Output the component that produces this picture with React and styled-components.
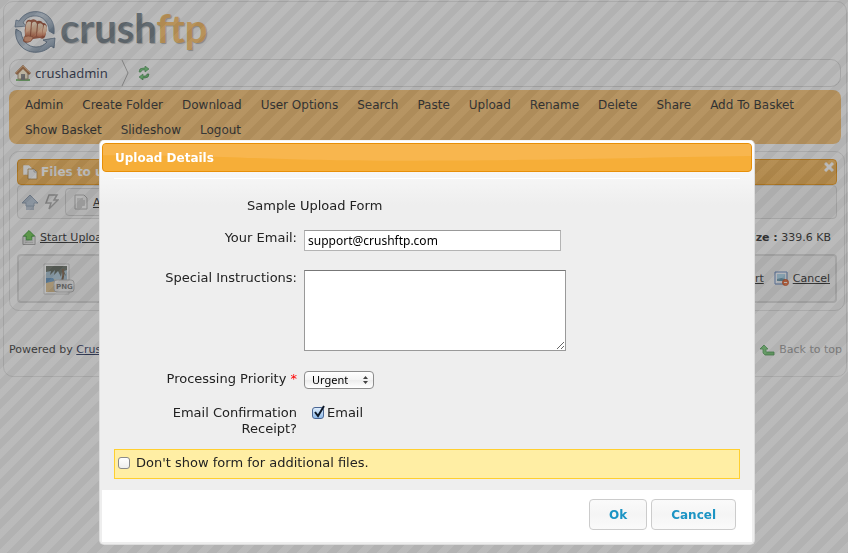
import React, { useState } from 'react';
import styled, { createGlobalStyle, css } from 'styled-components';

const GlobalStyle = createGlobalStyle`
    * {
        box-sizing: border-box;
    }
    body {
        margin: 0;
        background: #ffffff;
        color: #222222;
        font: 12px/16px "DejaVu Sans", Verdana, sans-serif;
    }
    button, input, select, textarea {
        font-family: inherit;
        margin: 0;
    }
`;

const orangeBar = css`
    border: 1px solid #e78f08;
    border-radius: 4px;
    background: #f6ae38;
`;

const Page = styled.main`
    margin: 1px 1px 0 3px;
    padding: 0 1px 18px 5px;
    border: 1px solid #e4e4e4;
    border-radius: 10px;
`;

const LogoRow = styled.header`
    display: flex;
    align-items: center;
    height: 57px;
    padding-left: 5px;
`;

const LogoText = styled.span`
    font: bold 40px/48px Lato, sans-serif;
    color: #6c7a84;
    text-shadow: 1px 1px 1px #b4b4b4;
    margin: 0 0 6px 4px;

    em {
        font-style: normal;
        color: #fbbc5c;
    }
`;

const Crumbs = styled.nav`
    display: flex;
    align-items: center;
    gap: 4px;
    height: 28px;
    margin-right: 4px;
    padding: 0 5px;
    border: 1px solid #dcdcdc;
    border-radius: 10px;
    font: 13px/16px "Noto Sans", sans-serif;

    svg:nth-of-type(2) {
        margin: 0 4px 0 9px;
    }
`;

const CrumbLink = styled.a`
    color: #1d2b45;
    text-decoration: none;
`;

const Menu = styled.nav`
    display: flex;
    flex-wrap: wrap;
    column-gap: 19px;
    margin: 3px 4px 0 0;
    padding: 3px 16px 1px;
    border-radius: 8px;
    background: #f8be6a;
`;

const MenuLink = styled.a`
    line-height: 25px;
    color: #222222;
    text-decoration: none;
`;

const UploadPanel = styled.section`
    margin-top: 7px;
    padding: 7px;
    border: 1px solid #e2e2e2;
    border-radius: 10px;
`;

const PanelTitle = styled.h2`
    ${orangeBar}
    display: flex;
    align-items: center;
    gap: 3px;
    height: 26px;
    margin: 0;
    padding: 0 2px 0 4px;
    background: linear-gradient(#f6b654, #f4b049);
    font-size: 12px;
    color: #ffffff;
`;

const CloseButton = styled.button`
    display: flex;
    align-self: flex-start;
    margin-left: auto;
    padding: 2px 0;
    border: 0;
    background: none;
`;

const ToolBar = styled.div`
    display: flex;
    align-items: center;
    gap: 6px;
    height: 34px;
    padding: 0 3px;
    border: 1px solid #dadada;
    border-radius: 4px;
    background: #f7f7f7;
`;

const ToolButton = styled.button`
    display: flex;
    align-items: center;
    gap: 5px;
    height: 28px;
    padding: 0 8px;
    border: 1px solid #d0d0d0;
    border-radius: 4px;
    background: #f3f3f3;
    font-size: 11px;
    text-decoration: underline;
    color: #222222;
`;

const IconLink = styled.a`
    display: flex;
    align-items: center;
    gap: 4px;
    font-size: 11px;
    color: ${(props) => (props.$muted ? '#999999' : '#222222')};
    text-decoration: ${(props) => (props.$muted ? 'none' : 'underline')};
`;

const StatusRow = styled.div`
    display: flex;
    align-items: center;
    justify-content: space-between;
    height: 35px;
    padding: 2px 6px 0 5px;
    font-size: 11px;
`;

const FileRow = styled.div`
    display: flex;
    align-items: center;
    gap: 10px;
    height: 49px;
    padding: 0 5px 0 24px;
    border: 2px solid #dadada;
    border-radius: 4px;
    background: #f5f5f5;

    svg:first-child {
        margin-right: auto;
    }
`;

const Footer = styled.footer`
    display: flex;
    justify-content: space-between;
    margin: 31px 3px 0 0;
    font-size: 11px;
    color: #333333;

    a {
        color: #1d2b55;
    }
    ${IconLink} {
        color: #999999;
    }
`;

const Overlay = styled.div`
    position: fixed;
    inset: 0;
    padding: 140px 93px 8px 99px;
    background: linear-gradient(135deg,
        rgba(68, 68, 68, 0.41) 25%, rgba(88, 88, 88, 0.41) 25%,
        rgba(88, 88, 88, 0.41) 50%, rgba(68, 68, 68, 0.41) 50%,
        rgba(68, 68, 68, 0.41) 75%, rgba(88, 88, 88, 0.41) 75%) 0 0 / 20px 20px;
    overflow: auto;
`;

const Dialog = styled.section`
    padding: 2px;
    border: 1px solid #dddddd;
    border-top-color: #f4f4f4;
    border-radius: 5px;
    background: linear-gradient(#ffffff, #eeeeee 64px);
`;

const DialogTitle = styled.h1`
    ${orangeBar}
    position: relative;
    height: 29px;
    margin: 0;
    padding: 0 12px;
    font-size: 12px;
    line-height: 28px;
    color: #ffffff;
    overflow: hidden;

    svg {
        position: absolute;
        inset: 0;
        width: 100%;
        height: 100%;
    }
    span {
        position: relative;
    }
`;

const Form = styled.form`
    font-size: 13px;
`;

const FormBody = styled.div`
    margin: 6px 12px 0;
    padding: 19px 0 11px;
    border-top: 1px solid #ffffff;
`;

const FormHeading = styled.h2`
    margin: 0 0 16px 133px;
    font-size: 13px;
    font-weight: normal;
`;

const FormRow = styled.div`
    display: grid;
    grid-template-columns: 183px 1fr;
    column-gap: 7px;
    margin-bottom: ${(props) => props.$gap}px;
`;

const Label = styled.label`
    text-align: right;

    em {
        font-style: normal;
        color: #ff0000;
    }
`;

const TextInput = styled.input`
    width: 257px;
    height: 21px;
    padding: 0 3px;
    border: 1px solid #b4b4b4;
    border-top-color: #999999;
    background: #ffffff;
    font: 12px/16px "Noto Sans", sans-serif;
    color: #000000;
`;

const TextArea = styled.textarea`
    display: block;
    width: 262px;
    height: 81px;
    border: 1px solid #999999;
    border-top-color: #777777;
    background: #ffffff;
`;

const SelectBox = styled.div`
    position: relative;
    width: 70px;

    svg {
        position: absolute;
        right: 6px;
        top: 5px;
        pointer-events: none;
    }
`;

const Select = styled.select`
    display: block;
    appearance: none;
    width: 100%;
    height: 18px;
    padding: 0 7px;
    border: 1px solid #8c8c8c;
    border-radius: 4px;
    background: linear-gradient(#ffffff, #f4f4f4 50%, #ececec 50%, #ffffff);
    font: 11px/14px "Noto Sans", sans-serif;
    color: #000000;
`;

const ReceiptCell = styled.div`
    padding-left: 8px;
`;

const CheckLabel = styled.label`
    display: flex;
    align-items: center;
    gap: ${(props) => (props.$wide ? 6 : 3)}px;
`;

const CheckBox = styled.span`
    position: relative;
    display: flex;

    svg {
        position: absolute;
        left: 0;
        bottom: 0;
        pointer-events: none;
    }
`;

const CheckInput = styled.input`
    appearance: none;
    width: 12px;
    height: 12px;
    border: 1px solid #8a8a8a;
    border-radius: 3px;
    background: linear-gradient(#ffffff, #eeeeee);

    &:checked {
        border-color: #4a6694;
        background: linear-gradient(#dcebfa, #8fbcec);
    }
`;

const Notice = styled.div`
    height: 30px;
    margin-top: 12px;
    padding: 5px 3px;
    border: 1px solid #ffcf2f;
    background: #ffeea4;
`;

const ButtonBar = styled.div`
    display: flex;
    justify-content: flex-end;
    gap: 4px;
    padding: 9px 16px 12px;
    background: #ffffff;
`;

const Button = styled.button`
    height: 31px;
    padding: 0 19px;
    border: 1px solid #cccccc;
    border-radius: 4px;
    background: linear-gradient(#fafafa, #f5f5f5 50%, #fafafa);
    font-size: 12px;
    font-weight: bold;
    color: #1c94c4;
`;

const LogoIcon = () => (
    <svg width="42" height="44" viewBox="0 0 42 44">
        <defs>
            <linearGradient id="steel" x1="0" y1="0" x2="1" y2="1">
                <stop offset="0" stopColor="#8aa0b8" />
                <stop offset=".5" stopColor="#c3d0de" />
                <stop offset="1" stopColor="#5d7690" />
            </linearGradient>
            <linearGradient id="skin" x1="0" y1="0" x2="0" y2="1">
                <stop offset="0" stopColor="#ffe9cd" />
                <stop offset=".6" stopColor="#f6b78c" />
                <stop offset="1" stopColor="#c05a38" />
            </linearGradient>
        </defs>
        <circle cx="21" cy="22" r="15" fill="#ffffff" opacity=".6" />
        <path
            d="M2 11l3 1C10 3 22 0 31 5c7 4 10 11 9 20l-5-3C35 13 28 6 20 7c-5 0-9 3-11 7l4 3-12 1z"
            fill="url(#steel)" stroke="#5f7690" strokeWidth=".8"
        />
        <path
            d="M2 20l5 3c1 9 7 15 15 15 5 0 8-2 11-5l-4-2 12-2-1 10-3-2C28 46 13 45 6 36 2 31 1 25 2 20z"
            fill="url(#steel)" stroke="#4b637e" strokeWidth=".8"
        />
        <path d="M12 14q1-4 5-3 3-2 6 1 4-1 6 2 4 0 4 5l-2 9q-2 3-5 1l-7 1-3 3q-5 2-7-1l2-5q-1-6 1-13z" fill="#a04a2e" />
        <path d="M12 16q1-5 5-3l-1 14q-3 2-5-1z" fill="url(#skin)" />
        <path d="M18 14q3-3 5 1l-1 12q-3 2-5 0z" fill="url(#skin)" />
        <path d="M24 15q3-2 5 1l-1 11q-3 2-5 0z" fill="url(#skin)" />
        <path d="M30 16q3 0 3 4l-2 7q-2 1-3-1z" fill="url(#skin)" />
        <path d="M10 28q4-2 9 0l-2 4q-4 2-7 0z" fill="#f0a177" stroke="#9a492e" strokeWidth=".6" />
    </svg>
);

const HomeIcon = () => (
    <svg width="16" height="16" viewBox="0 0 16 16">
        <path d="M1 14h14v2H1z" fill="#74b869" />
        <path d="M3 8l5-5 5 5v6H3z" fill="#fff1d2" stroke="#9b8268" />
        <path d="M1 9l7-7 7 7" fill="none" stroke="#a6683b" strokeWidth="3" />
        <path d="M1 8l7-7 7 7" fill="none" stroke="#dca36c" />
        <path d="M6 9h4v6H6z" fill="#7b7b7b" />
    </svg>
);

const CrumbArrow = () => (
    <svg width="9" height="26" viewBox="0 0 9 26">
        <path d="M1 0l6 13-6 13" fill="none" stroke="#aaaaaa" />
    </svg>
);

const RefreshIcon = () => (
    <svg width="12" height="14" viewBox="0 0 12 14">
        <path
            d="M1 6q0-4 4-4h2V0l4 3-4 3V4H5q-2 0-2 2zM11 8q0 4-4 4H5v2l-4-3 4-3v2h2q2 0 2-2z"
            fill="#65c36d" stroke="#2d7d3b" strokeWidth=".6"
        />
    </svg>
);

const CopyIcon = () => (
    <svg width="16" height="16" viewBox="0 0 16 16">
        <path d="M1 1h6l3 3v7H1z" fill="#ffffff" stroke="#d9a252" strokeWidth=".5" />
        <path d="M6 5h6l3 3v7H6z" fill="#ffffff" stroke="#aa7830" strokeWidth=".8" />
        <path d="M12 5v3h3" fill="none" stroke="#bbbbbb" />
    </svg>
);

const CloseIcon = () => (
    <svg width="10" height="10" viewBox="0 0 10 10">
        <path d="M1 1l8 8M9 1L1 9" stroke="#ffffff" strokeWidth="3" />
    </svg>
);

const UpIcon = () => (
    <svg width="18" height="18" viewBox="0 0 18 18">
        <path d="M9 2l8 8h-4v3H5v-3H1z" fill="#aebfd2" stroke="#8798ad" />
        <path d="M5 14h8M5 16h8" stroke="#7188a6" />
    </svg>
);

const BoltIcon = () => (
    <svg width="14" height="18" viewBox="0 0 14 18">
        <path d="M4 2h8L9 7h4L4 16l2-6H1z" fill="#eeeeee" stroke="#a0a0a0" strokeWidth="1.5" />
    </svg>
);

const PageIcon = () => (
    <svg width="14" height="16" viewBox="0 0 14 16">
        <path d="M1 1h9l3 3v11H1z" fill="#fafafa" stroke="#aaaaaa" />
        <path d="M3 5h6M3 7h8M3 9h8M3 11h8M3 13h5" stroke="#b4b4b4" />
    </svg>
);

const StartIcon = () => (
    <svg width="14" height="17" viewBox="0 0 15 17">
        <path d="M1 7h13v9H1z" fill="#eeeeee" stroke="#999999" />
        <path d="M3 12h9M3 14h9" stroke="#bbbbbb" />
        <path d="M7.500 1l6 6h-3v4h-6V7h-3z" fill="#6fd04f" stroke="#2e982a" />
    </svg>
);

const PngIcon = () => (
    <svg width="32" height="32" viewBox="0 0 32 32">
        <path d="M1 1h25v30H1z" fill="#ffffff" stroke="#c4c4c4" />
        <path d="M3 3h21v14H3z" fill="#a9c6d8" />
        <path d="M3 3h21v4l-3 1 2 5-4-4-1 5-3-6-4 4 1-5-5 5 1-4-5 1z" fill="#5c655b" />
        <path d="M3 18l6-2 15 3v10H3z" fill="#dcbd88" />
        <path d="M3 15h7l2 3-9 2z" fill="#5f93c0" />
        <path d="M20 6q1 6-1 13" fill="none" stroke="#76573e" strokeWidth="2" />
        <rect x="11" y="17" width="20" height="12" rx="3" fill="#eeeeee" stroke="#b4b4b4" />
        <text x="13" y="26" fontSize="7" fontWeight="bold" fill="#707070">PNG</text>
    </svg>
);

const CancelIcon = () => (
    <svg width="15" height="15" viewBox="0 0 15 15">
        <path d="M1 1h12v12H1z" fill="#f4f9ff" stroke="#597dbb" />
        <path d="M3 3h8v6H3z" fill="#a5d2ea" />
        <path d="M3 8l4-1 4 1v2H3z" fill="#5f91a8" />
        <circle cx="11.500" cy="11.500" r="3" fill="#ed6a34" stroke="#c64d20" />
        <path d="M10 11.500h3" stroke="#ffffff" />
    </svg>
);

const BackIcon = () => (
    <svg width="15" height="12" viewBox="0 0 15 12">
        <path d="M4 1l4 4H6v3h8v3H5L3 9V5H0z" fill="#73ca73" stroke="#459c4d" strokeWidth=".8" />
    </svg>
);

const SelectArrows = () => (
    <svg width="5" height="8" viewBox="0 0 5 8">
        <path d="M2.500 0L5 3H0zM2.500 8L0 5h5z" fill="#444444" />
    </svg>
);

const CheckMark = () => (
    <svg width="14" height="15" viewBox="0 0 14 15">
        <path d="M3 8l3 4 6-10" fill="none" stroke="#0c1828" strokeWidth="2" />
    </svg>
);

const TitleShine = () => (
    <svg viewBox="0 0 650 29" preserveAspectRatio="none" aria-hidden="true">
        <path d="M0 12C130 12 170 18 300 18S520 15 650 13V0H0z" fill="#f8b64e" />
    </svg>
);

const menuItems = [
    'Admin', 'Create Folder', 'Download', 'User Options', 'Search', 'Paste', 'Upload',
    'Rename', 'Delete', 'Share', 'Add To Basket', 'Show Basket', 'Slideshow', 'Logout',
];

const FilesPage = () => (
    <Page>
        <LogoRow>
            <LogoIcon />
            <LogoText>crush<em>ftp</em></LogoText>
        </LogoRow>
        <Crumbs>
            <HomeIcon />
            <CrumbLink href="#home">crushadmin</CrumbLink>
            <CrumbArrow />
            <RefreshIcon />
        </Crumbs>
        <Menu>
            {menuItems.map((item) => (
                <MenuLink href="#menu" key={item}>{item}</MenuLink>
            ))}
        </Menu>
        <UploadPanel>
            <PanelTitle>
                <CopyIcon />
                Files to upload
                <CloseButton type="button" aria-label="Close"><CloseIcon /></CloseButton>
            </PanelTitle>
            <ToolBar>
                <UpIcon />
                <BoltIcon />
                <ToolButton type="button"><PageIcon />Add</ToolButton>
            </ToolBar>
            <StatusRow>
                <IconLink href="#start"><StartIcon />Start Upload</IconLink>
                <span><b>Size :</b> 339.6 KB</span>
            </StatusRow>
            <FileRow>
                <PngIcon />
                <IconLink href="#start">Start</IconLink>
                <IconLink href="#cancel"><CancelIcon />Cancel</IconLink>
            </FileRow>
        </UploadPanel>
        <Footer>
            <span>Powered by <a href="#crushftp">CrushFTP</a></span>
            <IconLink href="#top" $muted><BackIcon />Back to top</IconLink>
        </Footer>
    </Page>
);

const Check = ({ checked, onChange, id }) => (
    <CheckBox>
        <CheckInput type="checkbox" id={id} checked={checked} onChange={onChange} />
        {checked && <CheckMark />}
    </CheckBox>
);

const UploadDialog = () => {
    const [receipt, setReceipt] = useState(true);
    const [skip, setSkip] = useState(false);

    return (
        <Dialog role="dialog" aria-labelledby="dialog-title">
            <DialogTitle id="dialog-title"><TitleShine /><span>Upload Details</span></DialogTitle>
            <Form onSubmit={(e) => e.preventDefault()}>
                <FormBody>
                    <FormHeading>Sample Upload Form</FormHeading>
                    <FormRow $gap={19}>
                        <Label htmlFor="email">Your Email:</Label>
                        <TextInput id="email" defaultValue="support@crushftp.com" />
                    </FormRow>
                    <FormRow $gap={20}>
                        <Label htmlFor="notes">Special Instructions:</Label>
                        <TextArea id="notes" />
                    </FormRow>
                    <FormRow $gap={16}>
                        <Label htmlFor="priority">Processing Priority <em>*</em></Label>
                        <SelectBox>
                            <Select id="priority"><option>Urgent</option></Select>
                            <SelectArrows />
                        </SelectBox>
                    </FormRow>
                    <FormRow $gap={12}>
                        <Label as="span">Email Confirmation Receipt?</Label>
                        <ReceiptCell>
                            <CheckLabel htmlFor="receipt">
                                <Check id="receipt" checked={receipt} onChange={() => setReceipt(!receipt)} />
                                Email
                            </CheckLabel>
                        </ReceiptCell>
                    </FormRow>
                    <Notice>
                        <CheckLabel htmlFor="skip" $wide>
                            <Check id="skip" checked={skip} onChange={() => setSkip(!skip)} />
                            Don't show form for additional files.
                        </CheckLabel>
                    </Notice>
                </FormBody>
                <ButtonBar>
                    <Button>Ok</Button>
                    <Button type="button">Cancel</Button>
                </ButtonBar>
            </Form>
        </Dialog>
    );
};

const App = () => (
    <>
        <GlobalStyle />
        <FilesPage />
        <Overlay>
            <UploadDialog />
        </Overlay>
    </>
);

export default App;
